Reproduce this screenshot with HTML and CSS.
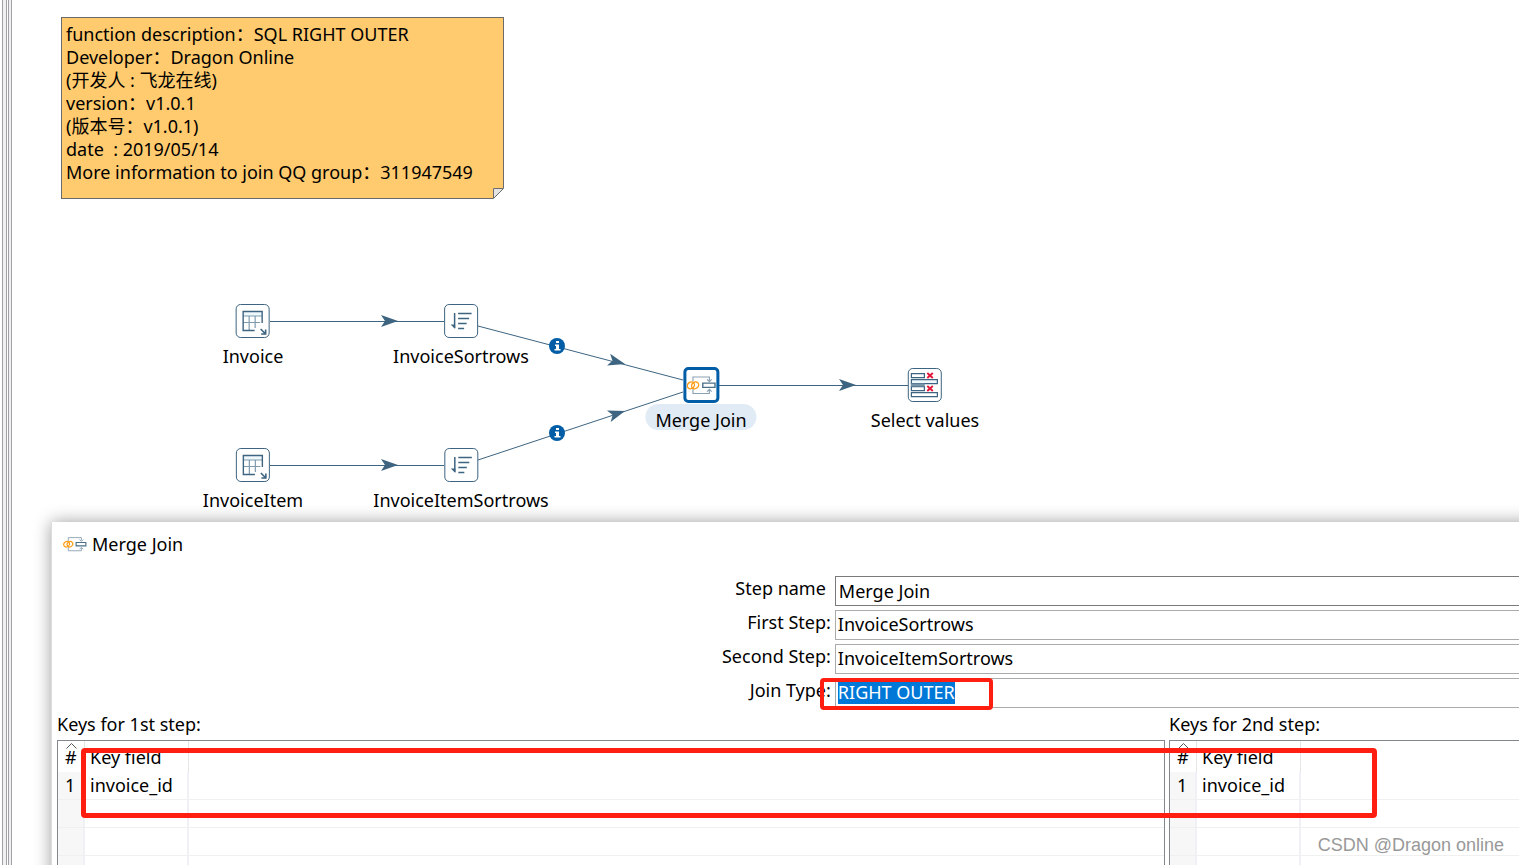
FILE: index.html
```html
<!DOCTYPE html>
<html lang="en">
<head>
<meta charset="utf-8">
<meta name="viewport" content="width=device-width, initial-scale=1">
<title>Merge Join</title>
<link rel="stylesheet" href="styles.css">
</head>
<body>
<svg class="defs" aria-hidden="true">
  <symbol id="icon-table" viewBox="0 0 32 32">
    <path d="M7 6.500h18v4.500H7z" fill="#eff8fd"/>
    <path d="M6.500 11h19M6.500 17.500h17M12.500 11v14M18.500 11v12" fill="none" stroke="#7f9bb0" stroke-width="1.200"/>
    <path d="M25.500 18V6.500h-19v19H18" fill="none" stroke="#3d6480" stroke-width="1.400"/>
    <path d="M24 24l4.500 4.500M29 24.500V29h-4.500" fill="none" stroke="#3d6480" stroke-width="1.600"/>
  </symbol>
  <symbol id="icon-sort" viewBox="0 0 32 32">
    <path d="M9.500 8v15" fill="none" stroke="#3d6480" stroke-width="1.500"/>
    <path d="M5.500 19.500h4.500V24z" fill="#3d6480"/>
    <path d="M13 8.500h13.500M13 13.500h11M13 18.500h8.500M13 23.500h6" fill="none" stroke="#3d6480" stroke-width="1.500"/>
  </symbol>
  <symbol id="icon-join" viewBox="0 0 32 32">
    <path d="M7 12V7.500h17.500v4M7 20v5h17.500v-4M22 10l2.500 2.500 2.500-2.500M22 23l2.500-2.500 2.500 2.500" fill="none" stroke="#8ba2b3" stroke-width="1.200"/>
    <g fill="none" stroke="#ff9e16" stroke-width="1.500"><ellipse cx="4.800" cy="16.300" rx="4" ry="3.400" transform="rotate(-40 4.800 16.300)"/><ellipse cx="9.300" cy="16.300" rx="4" ry="3.400" transform="rotate(-40 9.300 16.300)"/></g>
    <path d="M17.500 14h13v4.500h-13z" fill="#fff" stroke="#4b7088" stroke-width="1.500"/>
  </symbol>
  <symbol id="icon-select" viewBox="0 0 32 32">
    <g fill="#fff" stroke="#3d6480" stroke-width="1.200">
      <path d="M2.600 4.600h13v4h-13zM2.600 17.600h13v4h-13zM2.600 23.600h26v4h-26z"/>
      <path d="M2.600 10.600h26v4h-26z" fill="#eff8fd"/>
    </g>
    <path d="M2 14.500h14v3H2z" fill="#7894a8"/>
    <path d="M18.500 4l5.500 5M24 4l-5.500 5M18.500 17l5.500 5M24 17l-5.500 5" stroke="#e4173a" stroke-width="1.900"/>
  </symbol>
</svg>

<div class="app">
  <div class="rail"><span class="rail-wide"></span><span class="rail-narrow"></span></div>

  <main class="canvas">
    <div class="note">function description：SQL RIGHT OUTER
Developer：Dragon Online
(开发人 : 飞龙在线)
version：v1.0.1
(版本号：v1.0.1)
date  : 2019/05/14
More information to join QQ group：311947549<span class="note-fold"><svg viewBox="0 0 11 11"><path d="M0 0h11v11H0z" fill="#fff"/><path d="M.5 10.500V.5h10z" fill="#e4e4e4" stroke="#6b6b6b"/></svg></span></div>

    <svg class="hops" aria-hidden="true">
      <g stroke="#3d6480" fill="none">
        <path d="M258 321.500h174M258 465.500h174M466 326l205 54M466 460l205-68M706 385.500h190"/>
      </g>
      <g fill="#3d6480">
        <path d="M369 315l17 6-17 6 4-6z"/>
        <path d="M369 459l17 6-17 6 4-6z"/>
        <path d="M827 379l17 6-17 6 4-6z"/>
        <path d="M-17-6L0 0-17 6l4-6z" transform="translate(613 364) rotate(15)"/>
        <path d="M-17-6L0 0-17 6l4-6z" transform="translate(613 411) rotate(-18)"/>
      </g>
      <g id="info"><circle cx="545" cy="346" r="8" fill="#005da6"/><path d="M544 341h3v2h-3zM543 344.500h4v4.500h1.500v1.500h-6V349h1.500v-3h-1z" fill="#fff"/></g>
      <use href="#info" y="87"/>
    </svg>

    <div class="node node-invoice"><svg class="node-icon"><use href="#icon-table"/></svg><span class="node-label">Invoice</span></div>
    <div class="node node-invoice-sort"><svg class="node-icon"><use href="#icon-sort"/></svg><span class="node-label">InvoiceSortrows</span></div>
    <div class="node node-item"><svg class="node-icon"><use href="#icon-table"/></svg><span class="node-label">InvoiceItem</span></div>
    <div class="node node-item-sort"><svg class="node-icon"><use href="#icon-sort"/></svg><span class="node-label">InvoiceItemSortrows</span></div>
    <div class="node node-join selected"><svg class="node-icon"><use href="#icon-join"/></svg><span class="node-label">Merge Join</span></div>
    <div class="node node-select"><svg class="node-icon"><use href="#icon-select"/></svg><span class="node-label">Select values</span></div>
  </main>

  <section class="dialog" aria-labelledby="dialog-title">
    <header class="dialog-header">
      <svg class="dialog-icon" aria-hidden="true"><use href="#icon-join"/></svg>
      <span id="dialog-title">Merge Join</span>
    </header>

    <form class="form">
      <label class="wide-gap" for="step-name">Step name</label>
      <input class="field text-field" id="step-name" type="text" value="Merge Join">
      <label for="first-step">First Step:</label>
      <select class="field" id="first-step"><option>InvoiceSortrows</option><option>InvoiceItemSortrows</option></select>
      <label for="second-step">Second Step:</label>
      <select class="field" id="second-step"><option>InvoiceItemSortrows</option><option>InvoiceSortrows</option></select>
      <label for="join-type">Join Type:</label>
      <div class="field join-field">
        <select class="join-select" id="join-type"><option>RIGHT OUTER</option></select>
        <span class="mark mark-join"></span>
      </div>
    </form>

    <div class="keys">
      <div class="key-panel">
        <span class="key-title" id="keys-first">Keys for 1st step:</span>
        <table class="key-table" aria-labelledby="keys-first">
          <thead><tr><th class="num"><svg class="caret" viewBox="0 0 11 6"><path d="M.5 5.500l5-5 5 5" fill="none" stroke="#555"/></svg>#</th><th class="key">Key field</th><th></th></tr></thead>
          <tbody>
            <tr><td>1</td><td>invoice_id</td><td></td></tr>
            <tr><td></td><td></td><td></td></tr>
            <tr><td></td><td></td><td></td></tr>
            <tr><td></td><td></td><td></td></tr>
          </tbody>
        </table>
      </div>
      <div class="key-panel">
        <span class="key-title" id="keys-second">Keys for 2nd step:</span>
        <table class="key-table" aria-labelledby="keys-second">
          <thead><tr><th class="num"><svg class="caret" viewBox="0 0 11 6"><path d="M.5 5.500l5-5 5 5" fill="none" stroke="#555"/></svg>#</th><th class="key">Key field</th><th></th></tr></thead>
          <tbody>
            <tr><td>1</td><td>invoice_id</td><td></td></tr>
            <tr><td></td><td></td><td></td></tr>
            <tr><td></td><td></td><td></td></tr>
            <tr><td></td><td></td><td></td></tr>
          </tbody>
        </table>
      </div>
      <span class="mark mark-keys"></span>
    </div>
  </section>
  <div class="watermark">CSDN @Dragon online</div>
</div>
</body>
</html>
```
FILE: styles.css
```css
* { box-sizing: border-box; }

body {
  margin: 0;
  background: #fff;
  color: #000;
  font: 18px/23px "Noto Sans", "Noto Sans CJK SC", sans-serif;
}

.defs { position: absolute; width: 0; height: 0; }

.app {
  position: relative;
  display: flex;
  height: 100vh;
  overflow: hidden;
}

.rail { display: flex; gap: 1px; padding-left: 2px; width: 12px; }
.rail span { background: #f0f0f0; border: solid #a0a0a8; border-width: 0 1px; }
.rail-wide { width: 5px; }
.rail-narrow { width: 4px; }

.canvas { position: relative; flex: 1; }

.note {
  position: absolute;
  left: 49px;
  top: 17px;
  padding: 5px 30px 14px 4px;
  background: #ffcb6e;
  border: 1px solid #6b6b6b;
  white-space: pre;
}
.note-fold { position: absolute; right: -1px; bottom: -1px; width: 11px; height: 11px; }
.note-fold svg { display: block; }

.hops { position: absolute; left: 0; top: 0; width: 100%; height: 100%; }

.node {
  position: absolute;
  display: flex;
  flex-direction: column;
  align-items: center;
  gap: 5px;
  transform: translateX(-50%);
}
.node-icon {
  width: 34px;
  height: 34px;
  background: #fff;
  border: 1px solid #3d6480;
  border-radius: 5px;
}
.node-label { line-height: 26px; white-space: nowrap; }
.node-invoice { left: 241px; top: 304px; }
.node-invoice-sort { left: 449px; top: 304px; }
.node-item { left: 241px; top: 448px; }
.node-item-sort { left: 449px; top: 448px; }
.node-join { left: 689px; top: 367px; }
.node-select { left: 913px; top: 368px; }
.selected { gap: 1px; }
.selected .node-icon { width: 36px; height: 36px; border: 3px solid #005da6; }
.selected .node-label { padding: 6px 10px 0; line-height: 20px; background: #e1ebf5; border-radius: 13px; }

/* The window runs past the right edge, so its shadow does not end there. */
.dialog {
  position: absolute;
  left: 51px;
  right: -24px;
  top: 522px;
  bottom: -24px;
  padding-right: 24px;
  background: #fff;
  border-left: 1px solid #dcdcdc;
  box-shadow: 0 0 16px rgba(0, 0, 0, 0.38);
}
.dialog-header { display: flex; align-items: center; gap: 5px; padding: 10px 11px 20px; }
.dialog-icon { width: 24px; height: 24px; }

.form {
  display: grid;
  grid-template-columns: 8fr 7fr;
  gap: 4px 0;
  padding-left: 1px;
}
.form label { padding-right: 4px; line-height: 24px; text-align: right; }
.form .wide-gap { padding-right: 9px; }
.field {
  width: 100%;
  height: 30px;
  padding: 0 2px 2px;
  appearance: none;
  background: #fff;
  border: 1px solid #ababab;
  border-right: 0;
  border-radius: 0;
  color: inherit;
  font: inherit;
}
.text-field { padding: 0 3px; border-color: #7a7a7a; }
.join-field { position: relative; padding: 2px; }
.join-select {
  display: block;
  height: 23px;
  padding: 0;
  appearance: none;
  background: #0078d7;
  border: 0;
  border-radius: 0;
  color: #fff;
  font: inherit;
}

.mark { position: absolute; border: 4px solid #ff1e10; border-radius: 4px; pointer-events: none; }
.mark-join { left: -16px; top: -1px; width: 173px; height: 32px; }
.mark-keys { left: 29px; right: 142px; top: 35px; height: 70px; border-width: 5px; }

.keys {
  position: relative;
  display: grid;
  grid-template-columns: 19fr 6fr;
  gap: 4px;
  margin-top: 5px;
  padding-left: 5px;
}
.key-title { display: block; padding-bottom: 4px; }
.key-table {
  width: 100%;
  table-layout: fixed;
  border-collapse: separate;
  border-spacing: 0;
  border: 1px solid #828790;
  border-bottom: 0;
}
.key-panel:nth-child(2) .key-table { border-right: 0; }
.key-table th, .key-table td { padding: 0 0 0 5px; height: 28px; font-weight: 400; text-align: left; line-height: 23px; }
.key-table th { height: 31px; padding-top: 2px; border-right: 1px solid #e5e5e5; }
.key-table td { border-right: 2px solid #eff1f6; border-bottom: 1px solid #f0f0f0; }
.key-table tr > :last-child { border-right: 0; }
.key-table .num { position: relative; width: 27px; padding-left: 7px; }
.key-table .key { width: 104px; }
.key-table td:first-child { padding-left: 7px; background: #f7f7f7; }
.caret { position: absolute; left: 8px; top: 2px; width: 11px; height: 6px; }

.watermark {
  position: absolute;
  right: 15px;
  bottom: 8px;
  color: #999;
  font-family: "Liberation Sans", sans-serif;
  font-size: 18px;
}
```
